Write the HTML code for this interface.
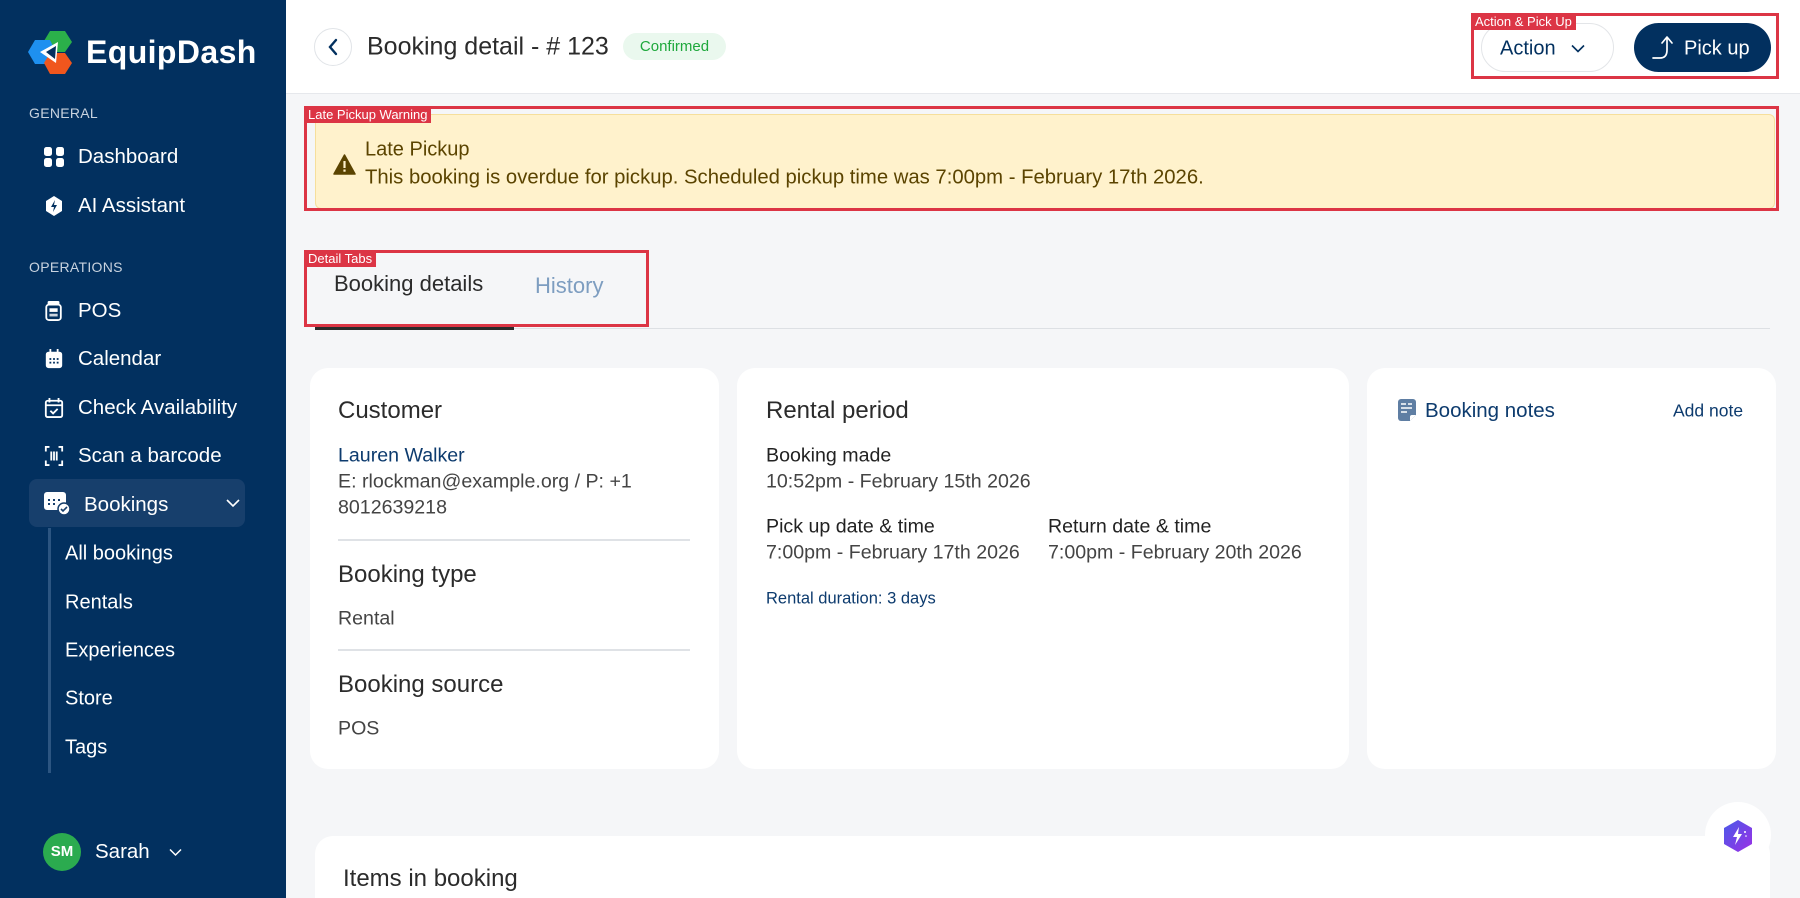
<!DOCTYPE html>
<html><head><meta charset="utf-8"><style>
*{box-sizing:border-box;margin:0;padding:0}
html{width:1800px;height:898px;overflow:hidden}
body{width:1800px;height:898px;overflow:hidden;background:#f5f6f8;font-family:"Liberation Sans",sans-serif;position:relative;color:#2b2b2b}
.sb{position:absolute;left:0;top:0;width:286px;height:898px;background:#02305f;color:#fff}
.abs{position:absolute}
.sec{position:absolute;left:29px;font-size:14px;color:#c9d3df;letter-spacing:.3px}
.nav{position:absolute;left:78px;font-size:20.5px;color:#fff;transform:translateY(-50%)}
.ic{position:absolute;left:44px;width:20px;height:20px;transform:translateY(-50%)}
.sub{position:absolute;left:65px;font-size:20px;color:#fff;transform:translateY(-50%)}
.hdr{position:absolute;left:286px;top:0;width:1514px;height:94px;background:#fff;border-bottom:1px solid #e6e8ec}
.mid{transform:translateY(-50%)}
.card{position:absolute;background:#fff;border-radius:18px}
.h{position:absolute;font-size:24px;color:#2b2b2b;transform:translateY(-50%)}
.t{position:absolute;font-size:19.6px;color:#444;transform:translateY(-50%);white-space:nowrap}
.lbl{position:absolute;font-size:19.6px;color:#222;transform:translateY(-50%);white-space:nowrap}
.red{position:absolute;border:3px solid #dc3545}
.rtag{position:absolute;left:-3px;top:-3px;background:#dc3545;color:#fff;font-size:13px;padding:1px 4px;line-height:15px}
.hr{position:absolute;height:2px;background:#dfe2e6}
</style></head><body>
<div class="sb">
  <svg class="abs" style="left:28px;top:31px" width="44" height="43" viewBox="0 0 44 43">
    <polygon points="22,0 37,0 44,11 37,21 24,21 16,10" fill="#2bb04a"/>
    <polygon points="0,21 7,9 22,9 28,21 22,33 7,33" fill="#1e90f0"/>
    <polygon points="22,22 37,22 44,32 37,43 22,43 16,32" fill="#f0561d"/>
    <polygon points="12,21 30,11 28,32" fill="#fff"/>
    <polygon points="18,21 28,15 27,28" fill="#02305f"/>
  </svg>
  <div class="abs" style="left:86px;top:34px;font-size:32px;font-weight:bold;color:#fff;letter-spacing:.4px">EquipDash</div>
  <div class="sec" style="top:105px">GENERAL</div>
  <svg class="ic" style="top:157px" viewBox="0 0 20 20" fill="#fff"><rect x="0" y="0" width="8" height="9" rx="2.5"/><rect x="12" y="0" width="8" height="9" rx="2.5"/><rect x="0" y="11" width="8" height="9" rx="2.5"/><rect x="12" y="11" width="8" height="9" rx="2.5"/></svg>
  <div class="nav" style="top:157px">Dashboard</div>
  <svg class="ic" style="top:206px" viewBox="0 0 20 20"><polygon points="10,0 18,5 18,15 10,20 2,15 2,5" fill="#fff"/><path d="M11 4 L7 11 H10 L9 16 L13 9 H10 Z" fill="#02305f"/></svg>
  <div class="nav" style="top:206px">AI Assistant</div>
  <div class="sec" style="top:259px">OPERATIONS</div>
  <svg class="ic" style="top:311px" viewBox="0 0 20 22"><rect x="3" y="0" width="13" height="5" rx="1.5" fill="#fff"/><rect x="1.5" y="4" width="16" height="17" rx="3" fill="none" stroke="#fff" stroke-width="2"/><rect x="5" y="8" width="9" height="4" fill="#fff"/><rect x="5" y="14" width="9" height="3" fill="#fff" opacity=".8"/></svg>
  <div class="nav" style="top:311px">POS</div>
  <svg class="ic" style="top:359px" viewBox="0 0 20 22"><rect x="1" y="3" width="18" height="18" rx="3" fill="#fff"/><rect x="5" y="0" width="2" height="5" fill="#fff"/><rect x="13" y="0" width="2" height="5" fill="#fff"/><g fill="#02305f"><rect x="5" y="10" width="2" height="2"/><rect x="9" y="10" width="2" height="2"/><rect x="13" y="10" width="2" height="2"/><rect x="5" y="14" width="2" height="2"/><rect x="9" y="14" width="2" height="2"/><rect x="13" y="14" width="2" height="2"/></g></svg>
  <div class="nav" style="top:359px">Calendar</div>
  <svg class="ic" style="top:408px" viewBox="0 0 20 22" fill="none" stroke="#fff" stroke-width="2"><rect x="1" y="3" width="18" height="18" rx="2"/><path d="M5 0v5M15 0v5M1 8h18M6 14l3 3 5-5"/></svg>
  <div class="nav" style="top:408px">Check Availability</div>
  <svg class="ic" style="top:456px" viewBox="0 0 20 22" fill="none" stroke="#fff" stroke-width="2"><path d="M5 1H1v5M15 1h4v5M5 21H1v-5M15 21h4v-5M7 6v10M10 6v10M13 6v10"/></svg>
  <div class="nav" style="top:456px">Scan a barcode</div>
  <div class="abs" style="left:29px;top:479px;width:216px;height:48px;background:#173f6c;border-radius:8px"></div>
  <svg class="abs" style="left:43px;top:490px" width="28" height="26" viewBox="0 0 28 26"><rect x="1" y="2" width="22" height="18" rx="3" fill="#fff"/><g fill="#173f6c"><rect x="5" y="9" width="2" height="2"/><rect x="10" y="9" width="2" height="2"/><rect x="15" y="9" width="2" height="2"/><rect x="5" y="13" width="2" height="2"/><rect x="10" y="13" width="2" height="2"/></g><circle cx="21" cy="19" r="6" fill="#fff" stroke="#173f6c" stroke-width="1.5"/><path d="M18 19l2 2 4-4" stroke="#173f6c" stroke-width="1.6" fill="none"/></svg>
  <div class="nav" style="top:505px;left:84px">Bookings</div>
  <svg class="abs" style="left:226px;top:498px" width="14" height="10" viewBox="0 0 14 10"><path d="M1 2l6 6 6-6" stroke="#fff" stroke-width="1.6" fill="none"/></svg>
  <div class="abs" style="left:48px;top:528px;width:3px;height:245px;background:#2c5581"></div>
  <div class="sub" style="top:554px">All bookings</div>
  <div class="sub" style="top:603px">Rentals</div>
  <div class="sub" style="top:651px">Experiences</div>
  <div class="sub" style="top:699px">Store</div>
  <div class="sub" style="top:748px">Tags</div>
  <div class="abs" style="left:43px;top:833px;width:38px;height:38px;border-radius:50%;background:#2bab4f;color:#fff;font-size:15px;font-weight:bold;text-align:center;line-height:38px">SM</div>
  <div class="nav" style="left:95px;top:852px">Sarah</div>
  <svg class="abs" style="left:169px;top:848px" width="13" height="9" viewBox="0 0 13 9"><path d="M1 1.5l5.5 5.5 5.5-5.5" stroke="#fff" stroke-width="1.5" fill="none"/></svg>
</div>

<div class="hdr">
  <div class="abs" style="left:28px;top:28px;width:38px;height:38px;border:1px solid #e1e4e8;border-radius:50%"></div>
  <svg class="abs" style="left:41px;top:38px" width="12" height="18" viewBox="0 0 12 18"><path d="M9 2L3 9l6 7" stroke="#02305f" stroke-width="2.4" fill="none" stroke-linecap="round"/></svg>
  <div class="abs mid" style="left:81px;top:47px;font-size:25px;color:#2b2b2b">Booking detail - # 123</div>
  <div class="abs" style="left:337px;top:33px;width:103px;height:27px;border-radius:14px;background:#eaf8ee;color:#1ea83c;font-size:15px;text-align:center;line-height:27px">Confirmed</div>
</div>
<div class="abs" style="left:1481px;top:23px;width:133px;height:49px;border:1px solid #e3e5e8;border-radius:25px;background:#fff"></div>
<div class="abs mid" style="left:1500px;top:49px;font-size:20px;color:#02305f">Action</div>
<svg class="abs" style="left:1571px;top:44px" width="14" height="9" viewBox="0 0 14 9"><path d="M1 1.5l6 6 6-6" stroke="#02305f" stroke-width="1.6" fill="none"/></svg>
<div class="abs" style="left:1634px;top:23px;width:137px;height:49px;border-radius:25px;background:#02305f"></div>
<svg class="abs" style="left:1652px;top:34px" width="24" height="26" viewBox="0 0 24 26"><path d="M1 24h7c5 0 7-3 7-8V4M10 9l5-6 5 6" stroke="#fff" stroke-width="1.7" fill="none" stroke-linecap="round" stroke-linejoin="round"/></svg>
<div class="abs mid" style="left:1684px;top:49px;font-size:20px;color:#fff">Pick up</div>
<div class="red" style="left:1471px;top:13px;width:308px;height:66px"><div class="rtag">Action &amp; Pick Up</div></div>

<div class="abs" style="left:315px;top:114px;width:1460px;height:95px;background:#fff2cc;border:1px solid #f6df9c;border-radius:6px"></div>
<svg class="abs" style="left:333px;top:154px" width="23" height="21" viewBox="0 0 23 21"><path d="M11.5 1L22 20H1Z" fill="#5b4400" stroke="#5b4400" stroke-linejoin="round" stroke-width="1.5"/><rect x="10.4" y="7" width="2.2" height="7" fill="#fff2cc"/><rect x="10.4" y="15.5" width="2.2" height="2.2" fill="#fff2cc"/></svg>
<div class="abs mid" style="left:365px;top:150px;font-size:20px;color:#5b4400">Late Pickup</div>
<div class="abs mid" style="left:365px;top:178px;font-size:20.3px;color:#5b4400">This booking is overdue for pickup. Scheduled pickup time was 7:00pm - February 17th 2026.</div>
<div class="red" style="left:304px;top:106px;width:1475px;height:105px"><div class="rtag">Late Pickup Warning</div></div>

<div class="abs mid" style="left:334px;top:284px;font-size:22px;color:#2b2b2b">Booking details</div>
<div class="abs mid" style="left:535px;top:286px;font-size:22px;color:#7d9dc0">History</div>
<div class="abs" style="left:315px;top:328px;width:1455px;height:1px;background:#dde0e4"></div>
<div class="abs" style="left:315px;top:327px;width:199px;height:3px;background:#2b2b2b"></div>
<div class="red" style="left:304px;top:250px;width:345px;height:77px"><div class="rtag">Detail Tabs</div></div>

<div class="card" style="left:310px;top:368px;width:409px;height:401px"></div>
<div class="h" style="left:338px;top:411px">Customer</div>
<div class="t" style="left:338px;top:456px;color:#0d3b6e">Lauren Walker</div>
<div class="t" style="left:338px;top:482px">E: rlockman@example.org / P: +1</div>
<div class="t" style="left:338px;top:508px">8012639218</div>
<div class="hr" style="left:338px;top:539px;width:352px"></div>
<div class="h" style="left:338px;top:575px">Booking type</div>
<div class="t" style="left:338px;top:619px">Rental</div>
<div class="hr" style="left:338px;top:649px;width:352px"></div>
<div class="h" style="left:338px;top:685px">Booking source</div>
<div class="t" style="left:338px;top:729px">POS</div>

<div class="card" style="left:737px;top:368px;width:612px;height:401px"></div>
<div class="h" style="left:766px;top:411px">Rental period</div>
<div class="lbl" style="left:766px;top:456px">Booking made</div>
<div class="t" style="left:766px;top:482px">10:52pm - February 15th 2026</div>
<div class="lbl" style="left:766px;top:527px">Pick up date &amp; time</div>
<div class="t" style="left:766px;top:553px">7:00pm - February 17th 2026</div>
<div class="lbl" style="left:1048px;top:527px">Return date &amp; time</div>
<div class="t" style="left:1048px;top:553px">7:00pm - February 20th 2026</div>
<div class="t" style="left:766px;top:599px;font-size:16.5px;color:#0d3b6e">Rental duration: 3 days</div>

<div class="card" style="left:1367px;top:368px;width:409px;height:401px"></div>
<svg class="abs" style="left:1398px;top:399px" width="18" height="22" viewBox="0 0 18 22"><path d="M3 0h12a3 3 0 0 1 3 3v13l-6 6H3a3 3 0 0 1-3-3V3a3 3 0 0 1 3-3z" fill="#5f7ea3"/><path d="M3 5h5M10 5h4M3 9h11M3 13h6" stroke="#fff" stroke-width="1.4"/><path d="M12 22v-4a2 2 0 0 1 2-2h4" fill="#fff"/></svg>
<div class="t" style="left:1425px;top:411px;font-size:20.5px;color:#0d3b6e">Booking notes</div>
<div class="t" style="left:1673px;top:411px;font-size:17.5px;color:#0d3b6e">Add note</div>

<div class="card" style="left:315px;top:836px;width:1455px;height:62px;border-radius:18px 18px 0 0"></div>
<div class="h" style="left:343px;top:879px">Items in booking</div>
<div class="abs" style="left:1705px;top:802px;width:66px;height:66px;border-radius:50%;background:#fff"></div>
<svg class="abs" style="left:1724px;top:820px" width="28" height="32" viewBox="0 0 28 32"><defs><linearGradient id="g" x1="0" y1="0" x2="1" y2="1"><stop offset="0" stop-color="#4a5ae8"/><stop offset="1" stop-color="#9b30e6"/></linearGradient></defs><polygon points="14,0 28,8 28,24 14,32 0,24 0,8" fill="url(#g)"/><path d="M15 7L9 17h4l-2 8 7-11h-4z" fill="#fff"/><circle cx="21" cy="12" r="1" fill="#fff"/><circle cx="22" cy="16" r=".8" fill="#fff"/></svg>
</body></html>
